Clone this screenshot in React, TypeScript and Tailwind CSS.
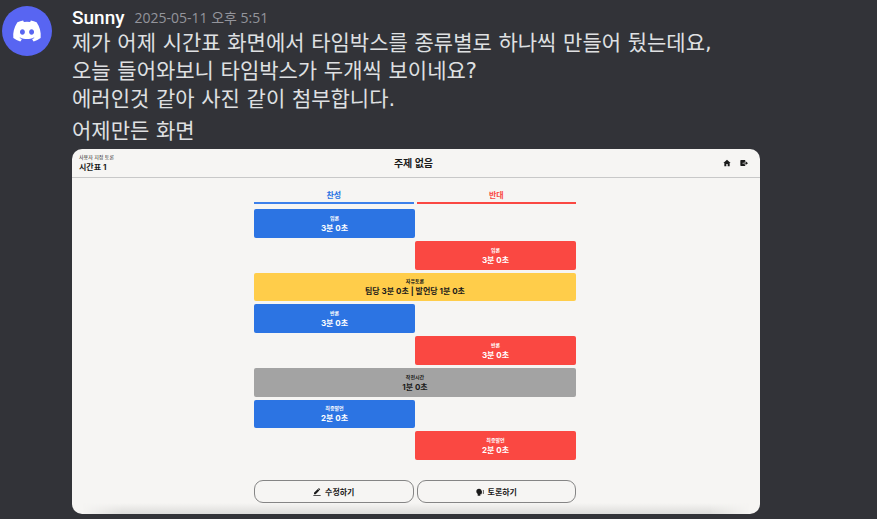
import { FaDiscord } from "react-icons/fa";
import { clsx } from "clsx";

type Side = "pros" | "cons" | "neutral" | "break";

interface TimeBox {
  side: Side;
  label: string;
  time: string;
}

const timeBoxes: TimeBox[] = [
  { side: "pros", label: "입론", time: "3분 0초" },
  { side: "cons", label: "입론", time: "3분 0초" },
  { side: "neutral", label: "자유토론", time: "팀당 3분 0초 | 발언당 1분 0초" },
  { side: "pros", label: "반론", time: "3분 0초" },
  { side: "cons", label: "반론", time: "3분 0초" },
  { side: "break", label: "작전시간", time: "1분 0초" },
  { side: "pros", label: "최종발언", time: "2분 0초" },
  { side: "cons", label: "최종발언", time: "2분 0초" },
];

const sideStyles: Record<Side, string> = {
  pros: "mr-auto w-1/2 bg-[#2c74e3] text-white",
  cons: "ml-auto w-1/2 bg-[#fa4842] text-white",
  neutral: "w-full bg-[#ffcd4a] text-[#1a1a1a]",
  break: "w-full bg-[#a3a3a3] text-[#1a1a1a]",
};

function HomeIcon() {
  return (
    <svg viewBox="0 0 24 24" className="size-2" fill="currentColor" aria-hidden="true">
      <path d="M12 2 1 12h3v10h6v-7h4v7h6V12h3z" />
    </svg>
  );
}

function ExitIcon() {
  return (
    <svg viewBox="0 0 24 24" className="size-2" fill="currentColor" aria-hidden="true">
      <path d="M3 3h11a2 2 0 0 1 2 2v3h-2v3H8v3h6v3h2v2a2 2 0 0 1-2 2H3a2 2 0 0 1-2-2V5a2 2 0 0 1 2-2z" />
      <path d="M10 11.500h7V7l7 5.500-7 5.500v-4.500h-7z" />
    </svg>
  );
}

function EditIcon() {
  return (
    <svg viewBox="0 0 24 24" className="size-2" fill="currentColor" aria-hidden="true">
      <path d="M3 14.500 14.500 3l4.500 4.500L8 19H3zM15.500 2l1-1a1.500 1.500 0 0 1 2.100 0l2.400 2.400a1.500 1.500 0 0 1 0 2.100L20 6.500zM1 21h22v2H1z" />
    </svg>
  );
}

function SpeakIcon() {
  return (
    <svg viewBox="0 0 24 24" className="size-2" fill="currentColor" aria-hidden="true">
      <path d="M9 2c5 0 8 3 8 7l2 4-2 1v3a2 2 0 0 1-2 2h-2v4H5v-5c-3-2-4-5-4-8 0-5 3-8 8-8z" />
      <path d="M21.500 6c2 4 2 8 0 12" fill="none" stroke="currentColor" strokeWidth="2" />
    </svg>
  );
}

function Timetable() {
  const actionClass =
    "flex h-[23px] items-center justify-center gap-1 rounded-[9px] border border-[#858585] text-[8px] leading-none font-bold";
  return (
    <section
      aria-label="시간표"
      className="w-[688px] max-w-full overflow-hidden rounded-[10px] bg-[#f6f5f3] font-['Inter','Noto_Sans_CJK_KR',sans-serif] text-[#1a1a1a]"
    >
      <header className="grid h-[29px] grid-cols-[1fr_auto_1fr] items-center border-b border-[#c8c8c8] pr-3 pl-[7px]">
        <div>
          <p className="text-[5px] leading-[8px]">사용자 지정 토론</p>
          <p className="text-[8px] leading-[12px] font-bold">시간표 1</p>
        </div>
        <h2 className="text-[10px] leading-[14px] font-bold">주제 없음</h2>
        <div className="flex justify-end gap-[9px]">
          <button type="button" aria-label="홈">
            <HomeIcon />
          </button>
          <button type="button" aria-label="나가기">
            <ExitIcon />
          </button>
        </div>
      </header>
      <div className="pt-[11px] pr-0.5">
        <div className="mx-auto w-[322px] max-w-full">
          <div className="grid grid-cols-2 gap-[3px] text-center text-[8px] leading-[13px] font-bold">
            <h3 className="border-b-2 border-[#3d80ea] text-[#2c74e3]">찬성</h3>
            <h3 className="border-b-2 border-[#fa4842] text-[#fa4842]">반대</h3>
          </div>
          <ol className="mt-[5px] grid h-[251px] grid-rows-8 gap-y-[3px]">
            {timeBoxes.map((box, index) => (
              <li
                key={index}
                className={clsx(
                  "flex flex-col items-center justify-center rounded-[2px] pt-px text-center",
                  sideStyles[box.side],
                )}
              >
                <p className="text-[5px] leading-[8px] font-semibold">{box.label}</p>
                <p className="text-[8px] leading-[12px] font-bold">{box.time}</p>
              </li>
            ))}
          </ol>
          <div className="mt-5 grid grid-cols-2 gap-[3px]">
            <button type="button" className={actionClass}>
              <EditIcon />
              수정하기
            </button>
            <button type="button" className={actionClass}>
              <SpeakIcon />
              토론하기
            </button>
          </div>
        </div>
      </div>
      <div className="h-[11px] bg-linear-to-b from-[#f6f5f3] to-[#dcdcda] mask-[linear-gradient(to_right,transparent_10px,black_50px,black_calc(100%-50px),transparent_calc(100%-10px))]" />
    </section>
  );
}

export default function App() {
  return (
    <main
      lang="ko"
      className="min-h-screen bg-[#323338] font-['DejaVu_Sans','Noto_Sans_CJK_KR',sans-serif] text-[#dfe0e2]"
    >
      <article className="flex gap-5 pt-1.5 pl-0.5">
        <div className="flex size-[50px] shrink-0 items-center justify-center rounded-full bg-[#5865f2]">
          <FaDiscord className="h-6 w-[30px] text-white" aria-hidden="true" />
        </div>
        <div className="min-w-0 flex-1">
          <header className="flex h-[23px] items-center gap-2.5">
            <h1 className="font-['Roboto','Noto_Sans_CJK_KR',sans-serif] text-[19px] leading-[23px] font-medium text-white">
              Sunny
            </h1>
            <time
              dateTime="2025-05-11T17:51"
              className="font-['Open_Sans','Noto_Sans_CJK_KR',sans-serif] text-[14px] leading-[23px] text-[#94959c]"
            >
              2025-05-11 오후 5:51
            </time>
          </header>
          <p className="text-[21px] leading-7">
            제가 어제 시간표 화면에서 타임박스를 종류별로 하나씩 만들어 뒀는데요,
            <br />
            오늘 들어와보니 타임박스가 두개씩 보이네요?
            <br />
            에러인것 같아 사진 같이 첨부합니다.
          </p>
          <p className="mt-1 mb-1 text-[21px] leading-7">어제만든 화면</p>
          <Timetable />
        </div>
      </article>
    </main>
  );
}
